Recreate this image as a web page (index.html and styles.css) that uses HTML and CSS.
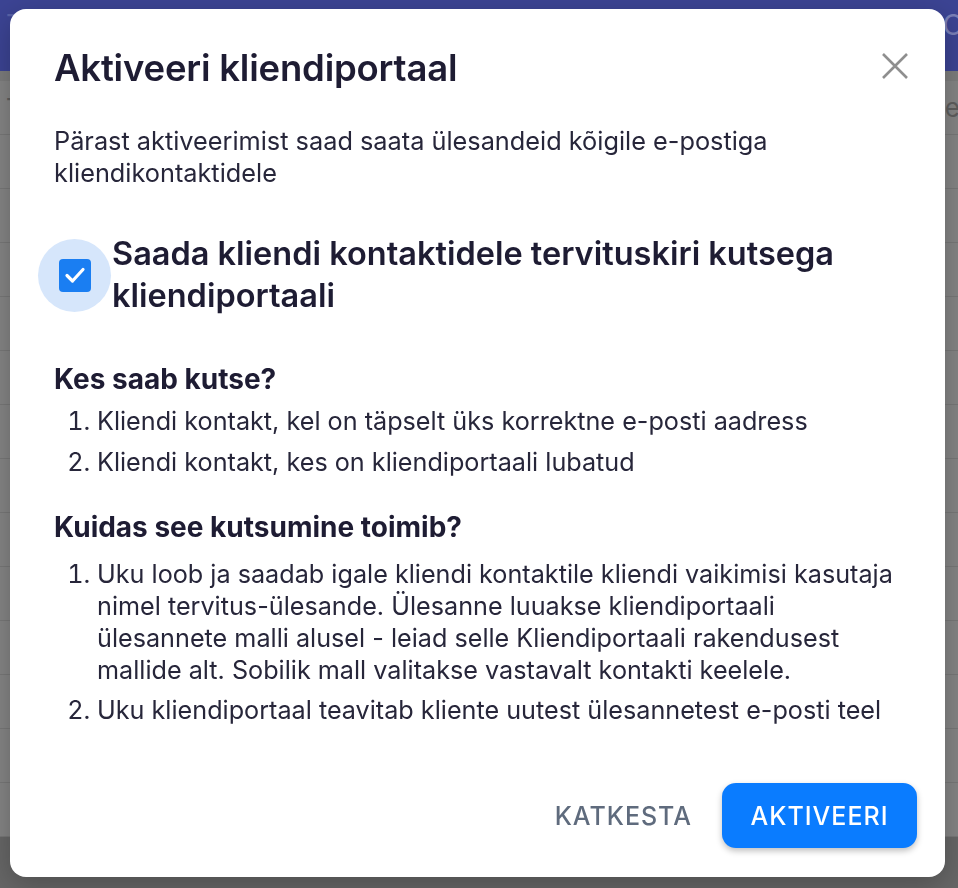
FILE: index.html
```html
<!DOCTYPE html>
<html lang="et">
<head>
  <meta charset="UTF-8" />
  <meta name="viewport" content="width=device-width, initial-scale=1.0"/>
  <title>Aktiveeri kliendiportaal</title>
  <link rel="stylesheet" href="styles.css">
</head>
<body>

  <div class="page">
    <div class="top-bar">
      <span class="top-title">Tööd</span>
      <span class="top-right">O</span>
    </div>
    <div class="rows">
      <div class="row"><span>Te</span><span>e</span></div>
      <div class="row"></div>
      <div class="row"></div>
      <div class="row"></div>
      <div class="row"></div>
      <div class="row"></div>
      <div class="row"></div>
      <div class="row"></div>
      <div class="row"></div>
      <div class="row"></div>
      <div class="row"></div>
      <div class="row"></div>
      <div class="row"></div>
      <div class="row"></div>
    </div>
    <div class="page-bottom"></div>
  </div>

  <div class="overlay">
    <div class="modal">
      <div class="modal-header">
        <h1 class="modal-title">Aktiveeri kliendiportaal</h1>
        <button class="close" aria-label="Sulge">
          <svg width="26" height="26" viewBox="0 0 26 26">
            <path d="M1 1 L25 25 M25 1 L1 25" stroke="#8f8f8f" stroke-width="2.6" fill="none"/>
          </svg>
        </button>
      </div>

      <p class="intro">Pärast aktiveerimist saad saata ülesandeid kõigile e-postiga kliendikontaktidele</p>

      <label class="check-row">
        <span class="check-ring">
          <span class="check-box">
            <svg width="24" height="24" viewBox="0 0 24 24">
              <path d="M4 12.5 L9.5 18 L20 6.5" stroke="#fff" stroke-width="3.2" fill="none" stroke-linecap="round" stroke-linejoin="round"/>
            </svg>
          </span>
        </span>
        <span class="check-label">Saada kliendi kontaktidele tervituskiri kutsega kliendiportaali</span>
      </label>

      <h2 class="section-title first">Kes saab kutse?</h2>
      <ol class="steps">
        <li>Kliendi kontakt, kel on täpselt üks korrektne e-posti aadress</li>
        <li>Kliendi kontakt, kes on kliendiportaali lubatud</li>
      </ol>

      <h2 class="section-title">Kuidas see kutsumine toimib?</h2>
      <ol class="steps steps-2">
        <li>Uku loob ja saadab igale kliendi kontaktile kliendi vaikimisi kasutaja nimel tervitus-ülesande. Ülesanne luuakse kliendiportaali ülesannete malli alusel - leiad selle Kliendiportaali rakendusest mallide alt. Sobilik mall valitakse vastavalt kontakti keelele.</li>
        <li>Uku kliendiportaal teavitab kliente uutest ülesannetest e-posti teel</li>
      </ol>

      <div class="actions">
        <button class="btn btn-text">KATKESTA</button>
        <button class="btn btn-primary">AKTIVEERI</button>
      </div>
    </div>
  </div>

</body>
</html>
```

FILE: styles.css
```css
body {
  font-family: Inter, "Noto Sans", sans-serif;
  margin: 0;
  padding: 0;
  background-color: #858585;
  overflow: hidden;
}

/* page behind the modal (already dimmed) */
.page {
  height: 888px;
  display: flex;
  flex-direction: column;
}

.top-bar {
  height: 73px;
  background-color: #3c4494;
  display: flex;
  justify-content: space-between;
  align-items: flex-start;
  padding: 8px 0 0 6px;
  color: #5a63a8;
  font-size: 28px;
}

.top-right {
  margin-right: -6px;
  color: #7a80b8;
}

.rows {
  flex-grow: 1;
  border-top: 10px solid #7d7d7d;
}

.row {
  height: 53px;
  border-bottom: 1px solid #787878;
  display: flex;
  justify-content: space-between;
  align-items: center;
  color: #5e5e5e;
  font-size: 26px;
  padding: 0 0 0 6px;
}

.row span:last-child {
  margin-right: -2px;
}

.page-bottom {
  height: 60px;
  background-color: #676767;
}

.overlay {
  position: fixed;
  top: 0;
  left: 0;
  width: 100%;
  height: 100%;
}

.modal {
  position: absolute;
  top: 9px;
  left: 10px;
  width: 935px;
  height: 868px;
  box-sizing: border-box;
  background-color: #fff;
  border-radius: 16px;
  padding: 39px 44px 0 44px;
  color: #27263a;
  box-shadow: 0 8px 30px rgba(0, 0, 0, 0.25);
}

.modal-header {
  display: flex;
  justify-content: space-between;
  align-items: center;
  height: 40px;
}

.modal-title {
  margin: 0;
  font-size: 36.5px;
  line-height: 40px;
  font-weight: 600;
  color: #1e1c33;
  letter-spacing: -0.2px;
}

.close {
  background: none;
  border: none;
  padding: 0;
  margin-right: -7px;
  margin-top: -4px;
  cursor: pointer;
  display: flex;
}

.intro {
  margin: 37px 0 0 0;
  font-size: 25.3px;
  line-height: 32px;
  width: 800px;
}

.check-row {
  display: flex;
  align-items: center;
  margin: 44px 0 0 -16px;
  cursor: pointer;
}

.check-ring {
  width: 73px;
  height: 73px;
  flex-shrink: 0;
  border-radius: 50%;
  background-color: #d6e6fb;
  display: flex;
  align-items: center;
  justify-content: center;
}

.check-box {
  width: 32px;
  height: 33px;
  border-radius: 4px;
  background-color: #1a7ef2;
  display: flex;
  align-items: center;
  justify-content: center;
}

.check-label {
  font-size: 32.5px;
  line-height: 42px;
  font-weight: 600;
  color: #1e1c33;
  margin-left: 1px;
}

.section-title {
  margin: 33px 0 0 0;
  font-size: 28px;
  line-height: 32px;
  font-weight: 700;
  color: #1e1c33;
}

.section-title.first {
  margin-top: 46px;
}

.steps {
  margin: 10px 0 0 0;
  padding-left: 43px;
  font-size: 25.2px;
  line-height: 32px;
}

.steps li {
  margin-bottom: 9px;
}

.steps li:last-child {
  margin-bottom: 0;
}

.steps-2 {
  margin-top: 15px;
}

.steps-2 li {
  margin-bottom: 8px;
}

.actions {
  display: flex;
  justify-content: flex-end;
  align-items: center;
  gap: 30px;
  margin-top: 57px;
  margin-right: -16px;
}

.btn {
  font-family: Inter, "Noto Sans", sans-serif;
  font-size: 25px;
  font-weight: 500;
  letter-spacing: 1px;
  border: none;
  cursor: pointer;
}

.btn-text {
  background: none;
  color: #5f6b7d;
  padding: 0;
}

.btn-primary {
  background-color: #0a7cff;
  color: #fff;
  width: 195px;
  height: 65px;
  border-radius: 14px;
  box-shadow: 0 3px 6px rgba(0, 0, 0, 0.25);
}
```
